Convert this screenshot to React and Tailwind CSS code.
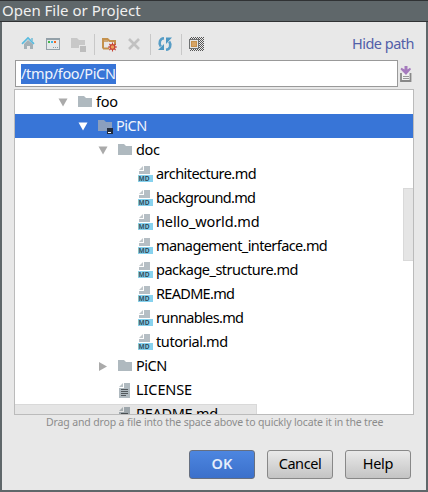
import React from "react";

function HomeIcon() {
  return (
    <svg width="16" height="16" viewBox="0 0 16 16">
      <path d="M4 8l4-4 5 4v5h-3v-3H7v3H4z" fill="#a4b0b6" />
      <path d="M2 7.800L8 2l6 5.800" fill="none" stroke="#58bbdf" strokeWidth="1.700" />
      <path d="M11 2h2v4l-2-2z" fill="#8fc6da" />
    </svg>
  );
}

function WindowIcon() {
  return (
    <svg width="16" height="16" viewBox="0 0 16 16" shapeRendering="crispEdges">
      <path d="M1 2h14v12H1z" fill="#93a0a8" />
      <path d="M2 4h12v9H2z" fill="#e4e8ea" />
      <path d="M3 5h2v2H3z" fill="#43b649" />
      <path d="M6 5h2v2H6z" fill="#40b6e0" />
      <path d="M9 5h2v2H9z" fill="#f26522" />
      <path d="M8 11h1v1H8zM10 11h1v1h-1zM12 11h1v1h-1z" fill="#8f9ca3" />
    </svg>
  );
}

function ProjectIcon() {
  return (
    <svg width="16" height="16" viewBox="0 0 16 16">
      <path d="M1 2h6l2 2h6v5H9v3H1z" fill="#c8c8c8" />
      <path d="M10 10h6v6h-6z" fill="#bdbdbd" />
    </svg>
  );
}

function NewFolderIcon() {
  return (
    <svg width="16" height="16" viewBox="0 0 16 16">
      <path d="M2 12.500V3h4.500l2 2H14v4M2 12.500h6" fill="none" stroke="#c4914d" strokeWidth="2" />
      <path d="M2 5h5" stroke="#c4914d" strokeWidth="1.500" />
      <path d="M11.500 6.500v9M7 11h9M8.300 7.800l6.400 6.400M14.700 7.800l-6.400 6.400" stroke="#c74435" strokeWidth="1.100" />
      <circle cx="11.500" cy="11" r="2.400" fill="#eda05b" stroke="#c74435" strokeWidth="1.300" />
    </svg>
  );
}

function DeleteIcon() {
  return (
    <svg width="16" height="16" viewBox="0 0 16 16">
      <path d="M3 3l10 10M13 3L3 13" stroke="#c1c1c1" strokeWidth="2.600" />
    </svg>
  );
}

function RefreshIcon() {
  return (
    <svg width="16" height="16" viewBox="0 0 16 16">
      <path d="M7 2.200C3 2.500 1.300 7 3.800 10.500" fill="none" stroke="#579dc6" strokeWidth="2.600" />
      <path d="M1 14h6V8z" fill="#4d97c2" />
      <path d="M9 13.800c4-.3 5.700-4.800 3.200-8.300" fill="none" stroke="#579dc6" strokeWidth="2.600" />
      <path d="M15 1.500H9v6.500z" fill="#4d97c2" />
    </svg>
  );
}

function HiddenFilesIcon() {
  return (
    <svg width="16" height="16" viewBox="0 0 16 16" shapeRendering="crispEdges">
      <defs>
        <pattern id="dither" width="2" height="2" patternUnits="userSpaceOnUse">
          <path d="M0 0h1v1H0zM1 1h1v1H1z" fill="#555" />
        </pattern>
      </defs>
      <path d="M2 1h14v14H2z" fill="url(#dither)" />
      <path d="M1 3h10v10H1z" fill="#6e7071" />
      <path d="M2 4h8v8H2z" fill="#e5e5e5" />
      <path d="M3 5h6v6H3z" fill="#c4914d" />
      <path d="M4 6h4v4H4z" fill="#d7a466" />
    </svg>
  );
}

function HistoryIcon() {
  return (
    <svg width="12" height="16" viewBox="0 0 12 16">
      <path d="M1 7v8h10V7" fill="#f0f0f0" />
      <path d="M1 7v8h9.500V7" fill="none" stroke="#888" strokeWidth="1.800" />
      <path d="M3 10.500h6M3 12.500h6" stroke="#999" />
      <path d="M4.500 0h3v3.500L10 1.800l1 1.500L6 9 .5 3.300l1-1.500 3 1.700z" fill="#a57abd" />
    </svg>
  );
}

function FolderIcon({ selected }) {
  return (
    <svg width="16" height="16" viewBox="0 0 16 16" className="block">
      <path d="M1 2h6l2 2h6v9H1z" fill={selected ? "#8b9fbe" : "#afb9bf"} />
      {selected && (
        <>
          <path d="M10 10h6v6h-6z" fill="#222c3d" />
          <path d="M11 14h3v1h-3z" fill="#fff" />
        </>
      )}
    </svg>
  );
}

function MarkdownIcon() {
  return (
    <svg width="16" height="16" viewBox="0 0 16 16" className="block">
      <path d="M7 0h6v8H2V5h5z" fill="#b5bec4" />
      <path d="M6 0v4H2z" fill="#bfc6ca" />
      <path d="M1 9h15v7H1z" fill="#87d2ee" />
      <text x="1.600" y="15" fontSize="7" fontWeight="700" fontFamily="Noto Sans, sans-serif" fill="#34505f" textLength="11" lengthAdjust="spacingAndGlyphs">
        MD
      </text>
    </svg>
  );
}

function TextIcon() {
  return (
    <svg width="16" height="16" viewBox="0 0 16 16" className="block">
      <path d="M7 1h6v15H2V6h5z" fill="#afb9bf" />
      <path d="M6 1v4H2z" fill="#b9c2c6" />
      <path d="M4 7.500h7M4 9.500h7M4 11.500h7M4 13.500h5" stroke="#52585c" />
    </svg>
  );
}

function Arrow({ kind, selected }) {
  return (
    <svg width="10" height="10" viewBox="0 0 10 10" className="block">
      {kind === "open" && <path d="M.5 1.500h9L5 9.500z" fill={selected ? "#fff" : "#aaa"} />}
      {kind === "closed" && <path d="M1 1v9l8-4.500z" fill="#aaa" />}
    </svg>
  );
}

const rows = [
  { name: "foo", arrow: "open", icon: "folder", pad: "pl-[43px]", tracking: "tracking-[-0.2px]" },
  { name: "PiCN", arrow: "open", icon: "folder", pad: "pl-[63px]", tracking: "tracking-[-0.45px]", selected: true },
  { name: "doc", arrow: "open", icon: "folder", pad: "pl-[83px]", tracking: "tracking-[-0.4px]" },
  { name: "architecture.md", icon: "md", pad: "pl-[103px]", tracking: "tracking-[-0.55px]" },
  { name: "background.md", icon: "md", pad: "pl-[103px]", tracking: "tracking-[-0.7px]" },
  { name: "hello_world.md", icon: "md", pad: "pl-[103px]", tracking: "tracking-[-0.1px]" },
  { name: "management_interface.md", icon: "md", pad: "pl-[103px]", tracking: "tracking-[-0.6px]" },
  { name: "package_structure.md", icon: "md", pad: "pl-[103px]", tracking: "tracking-[-0.5px]" },
  { name: "README.md", icon: "md", pad: "pl-[103px]", tracking: "tracking-[-0.7px]" },
  { name: "runnables.md", icon: "md", pad: "pl-[103px]", tracking: "tracking-[-0.65px]" },
  { name: "tutorial.md", icon: "md", pad: "pl-[103px]", tracking: "tracking-[-0.4px]" },
  { name: "PiCN", arrow: "closed", icon: "folder", pad: "pl-[83px]", tracking: "tracking-[-0.45px]" },
  { name: "LICENSE", icon: "text", pad: "pl-[83px]", tracking: "tracking-[-0.1px]" },
  { name: "README.md", icon: "text", pad: "pl-[83px]", tracking: "tracking-[-0.3px]" },
];

function Row({ name, arrow, icon, pad, tracking, selected }) {
  return (
    <div className={`flex h-6 shrink-0 items-center ${pad} ${selected ? "bg-[#3875d7] text-[#f0f4fc]" : "text-black"}`}>
      <Arrow kind={arrow} selected={selected} />
      <div className="ml-[9px] shrink-0">
        {icon === "folder" && <FolderIcon selected={selected} />}
        {icon === "md" && <MarkdownIcon />}
        {icon === "text" && <TextIcon />}
      </div>
      <span className={`-mt-[2px] ml-[3px] text-[14.5px] leading-6 whitespace-nowrap ${tracking}`}>{name}</span>
    </div>
  );
}

function Separator() {
  return <div className="h-[21px] w-px bg-[#c8c8c8]" />;
}

const buttonBase = "flex h-[29px] w-[66px] items-center justify-center rounded-[3px] border pb-[2px] text-[14.5px]";

export default function App() {
  return (
    <div className="flex h-[492px] w-[428px] flex-col bg-[#5f676a] font-['Noto_Sans',sans-serif]">
      <header className="flex h-[22px] shrink-0 items-center border-t border-b border-[#303234] pl-[2px] text-[15px] leading-5 text-[#f0f0f0]">
        <span className="pb-[2px] whitespace-nowrap">Open File or Project</span>
      </header>
      <main className="mx-[2px] flex h-[468px] flex-col bg-[#e8e8e8] pr-[11px] pl-[12px]">
        <div className="flex h-[38px] shrink-0 items-center justify-between pt-[6px] pl-[6px]">
          <div className="flex items-center">
            <HomeIcon />
            <div className="ml-[9px]"><WindowIcon /></div>
            <div className="ml-[9px]"><ProjectIcon /></div>
            <div className="ml-[8px]"><Separator /></div>
            <div className="ml-[6px]"><NewFolderIcon /></div>
            <div className="ml-[9px]"><DeleteIcon /></div>
            <div className="ml-[8px]"><Separator /></div>
            <div className="ml-[6px]"><RefreshIcon /></div>
            <div className="ml-[8px]"><Separator /></div>
            <div className="ml-[6px]"><HiddenFilesIcon /></div>
          </div>
          <span className="-mt-[2px] pr-px text-[14.5px] leading-5 tracking-[-0.5px] whitespace-nowrap text-[#525fa8]">Hide path</span>
        </div>
        <div className="flex h-[27px] shrink-0 items-center pl-px">
          <div className="flex h-[27px] w-[383px] items-center border border-[#999] bg-white pl-[5px]">
            <span className="h-5 bg-[#3875d7] text-[14.5px] leading-[18px] tracking-[-0.35px] whitespace-nowrap text-[#f0f4fc]">/tmp/foo/PiCN</span>
          </div>
          <div className="ml-[2px] shrink-0"><HistoryIcon /></div>
        </div>
        <div className="relative mt-[2px] flex h-[326px] w-[400px] shrink-0 flex-col overflow-hidden border border-[#bbb] bg-white">
          {rows.map((row, i) => (
            <Row key={i} {...row} />
          ))}
          <div className="absolute top-[98px] right-0 h-[73px] w-[10px] border border-r-0 border-black/5 bg-black/10" />
          <div className="absolute bottom-0 left-0 h-[10px] w-[242px] border border-b-0 border-l-0 border-black/5 bg-black/10" />
        </div>
        <p className="h-[15px] pl-[32px] text-[10.5px] leading-[14px] tracking-[-0.14px] whitespace-nowrap text-[#8c8c8c]">
          Drag and drop a file into the space above to quickly locate it in the tree
        </p>
        <div className="mt-[20px] flex justify-end gap-3 pr-[4px]">
          <button className={`${buttonBase} border-[#666f80] bg-linear-to-b from-[#4d86e0] to-[#3b70cb] font-semibold text-[#e6eefb]`}>OK</button>
          <button className={`${buttonBase} border-[#888] bg-linear-to-b from-[#e9e9e9] to-[#c4c4c4] tracking-[-0.4px] text-black`}>Cancel</button>
          <button className={`${buttonBase} border-[#888] bg-linear-to-b from-[#e9e9e9] to-[#c4c4c4] tracking-[-0.3px] text-black`}>Help</button>
        </div>
      </main>
    </div>
  );
}
